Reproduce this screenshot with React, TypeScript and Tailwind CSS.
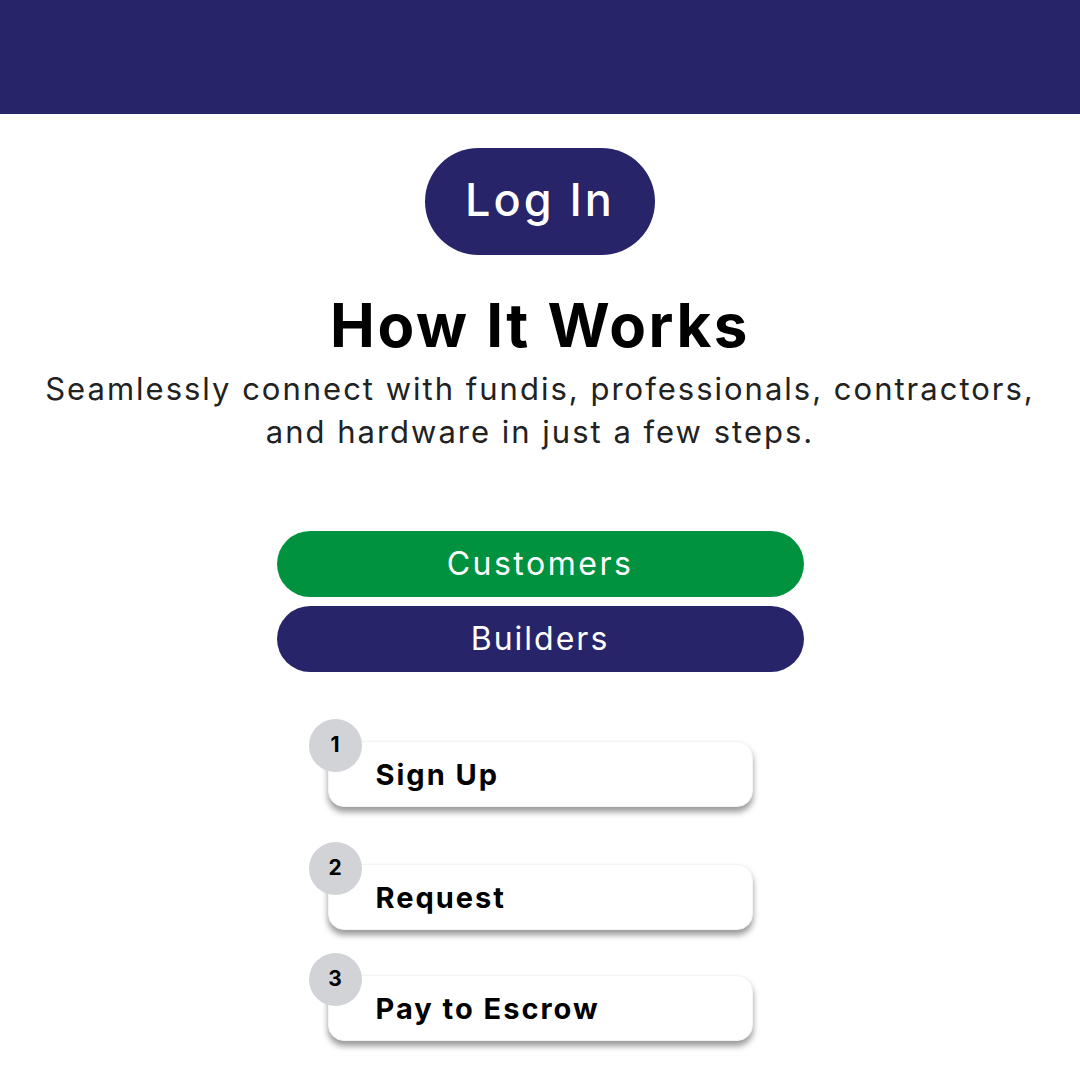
import React from 'react';

const steps = [
    { n: 1, label: 'Sign Up', mt: 'mt-[69px]' },
    { n: 2, label: 'Request', mt: 'mt-[57px]' },
    { n: 3, label: 'Pay to Escrow', mt: 'mt-[45px]' },
];

const StepCard = ({ n, label, mt }: { n: number; label: string; mt: string }) => (
    <div className={`relative ${mt} w-[425px] h-[66px] bg-white rounded-[16px] shadow-[0_5px_6px_rgba(0,0,0,0.4)] border border-gray-100 flex items-center pl-[47px]`}>
        {/* step number badge */}
        <div className="absolute -left-[20px] -top-[23px] w-[53px] h-[53px] rounded-full bg-[#d2d3d6] flex items-center justify-center pb-[2px] text-[21px] font-bold text-black">
            {n}
        </div>
        <span className="text-[29px] font-bold text-black mt-[2px] tracking-[2px]">{label}</span>
    </div>
);

const App = () => {
    return (
        <div className="w-[1080px] h-[1080px] bg-white overflow-hidden font-['Inter','Noto_Sans',sans-serif]">
            {/* Header */}
            <div className="h-[114px] bg-[#27246a]" />

            <div className="flex flex-col items-center">
                <button className="mt-[34px] w-[230px] h-[107px] rounded-full bg-[#27246a] text-white text-[45px] font-medium tracking-[3px] pb-[3px]">
                    Log In
                </button>

                <h1 className="mt-[34px] text-[60px] leading-[72px] font-bold text-black tracking-[2.5px]">How It Works</h1>
                <p className="mt-[6px] text-[31px] leading-[43px] text-[#222] text-center tracking-[2px]">
                    Seamlessly connect with fundis, professionals, contractors,
                    <br />
                    and hardware in just a few steps.
                </p>

                {/* Tabs */}
                <div className="mt-[78px] flex flex-col gap-[9px]">
                    <button className="w-[527px] h-[66px] rounded-full bg-[#00923f] text-white text-[32px] tracking-[2.5px]">Customers</button>
                    <button className="w-[527px] h-[66px] rounded-full bg-[#27246a] text-white text-[32px] tracking-[2px]">Builders</button>
                </div>

                {/* Steps */}
                <div className="flex flex-col">
                    {steps.map((s) => (
                        <StepCard key={s.n} {...s} />
                    ))}
                </div>
            </div>
        </div>
    );
};

export default App;
